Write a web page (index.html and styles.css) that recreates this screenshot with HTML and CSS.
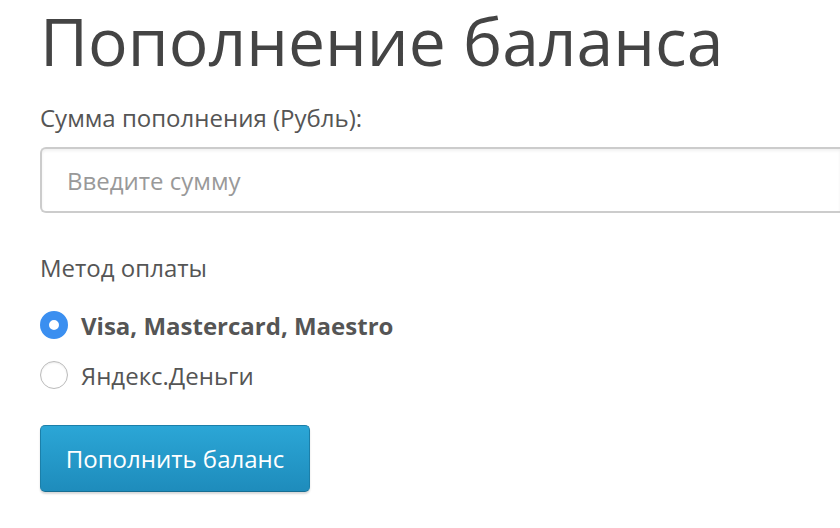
FILE: index.html
```html
<!DOCTYPE html>
<html lang="ru">
<head>
    <meta charset="UTF-8">
    <meta name="viewport" content="width=device-width, initial-scale=1.0">
    <title>Пополнение баланса</title>
    <link rel="stylesheet" href="styles.css">
</head>
<body>
    <div class="page">
        <h1 class="title">Пополнение баланса</h1>

        <form class="topup">
            <label class="field-label" for="amount">Сумма пополнения (Рубль):</label>
            <input class="amount" id="amount" type="text" placeholder="Введите сумму">

            <div class="field-label method">Метод оплаты</div>

            <label class="option">
                <input type="radio" name="method" checked>
                <span class="radio"></span>
                <span class="option-text bold">Visa, Mastercard, Maestro</span>
            </label>
            <label class="option">
                <input type="radio" name="method">
                <span class="radio"></span>
                <span class="option-text">Яндекс.Деньги</span>
            </label>

            <button class="submit" type="button">Пополнить баланс</button>
        </form>
    </div>
</body>
</html>
```

FILE: styles.css
```css
html, body {
    margin: 0;
    height: 100%;
    background-color: #fff;
    font-family: "Open Sans", Arial, sans-serif;
    color: #555;
}

.page {
    padding: 0 0 0 40px;
}

.title {
    margin: 0;
    font-size: 66px;
    font-weight: 400;
    line-height: 80px;
    color: #444;
}

.topup {
    display: flex;
    flex-direction: column;
    align-items: flex-start;
}

.field-label {
    font-size: 24px;
    line-height: 32px;
    color: #555;
}

.topup > .field-label:first-child {
    margin-top: 22px;
}

.amount {
    box-sizing: border-box;
    width: 100%;
    height: 66px;
    margin-top: 13px;
    padding: 0 25px;
    border: 2px solid #ccc;
    border-right: none;
    border-radius: 6px 0 0 6px;
    box-shadow: inset 0 2px 3px rgba(0, 0, 0, 0.06);
    font-family: inherit;
    font-size: 24px;
    color: #555;
    outline: none;
}

.amount::placeholder {
    color: #999;
}

.method {
    margin-top: 39px;
}

.option {
    display: flex;
    align-items: center;
    gap: 13px;
    height: 50px;
    cursor: pointer;
}

.topup .method + .option {
    margin-top: 16px;
}

.option input {
    display: none;
}

.radio {
    box-sizing: border-box;
    width: 28px;
    height: 28px;
    border-radius: 50%;
    border: 1px solid #bbb;
    background: #fff;
    box-shadow: inset 0 1px 2px rgba(0, 0, 0, 0.08);
}

.option input:checked + .radio {
    border: 9px solid #3b8ff0;
    box-shadow: none;
}

.option-text {
    font-size: 24px;
    color: #555;
}

.bold {
    font-weight: 700;
}

.submit {
    margin-top: 25px;
    width: 270px;
    height: 67px;
    padding: 0;
    border: 1px solid #1b7fa9;
    border-bottom-color: #176e93;
    border-radius: 5px;
    background: linear-gradient(#2ba6d6, #1e8cbc);
    box-shadow: 0 2px 2px rgba(0, 0, 0, 0.15);
    font-family: inherit;
    font-size: 24px;
    color: #fff;
    cursor: pointer;
}
```
